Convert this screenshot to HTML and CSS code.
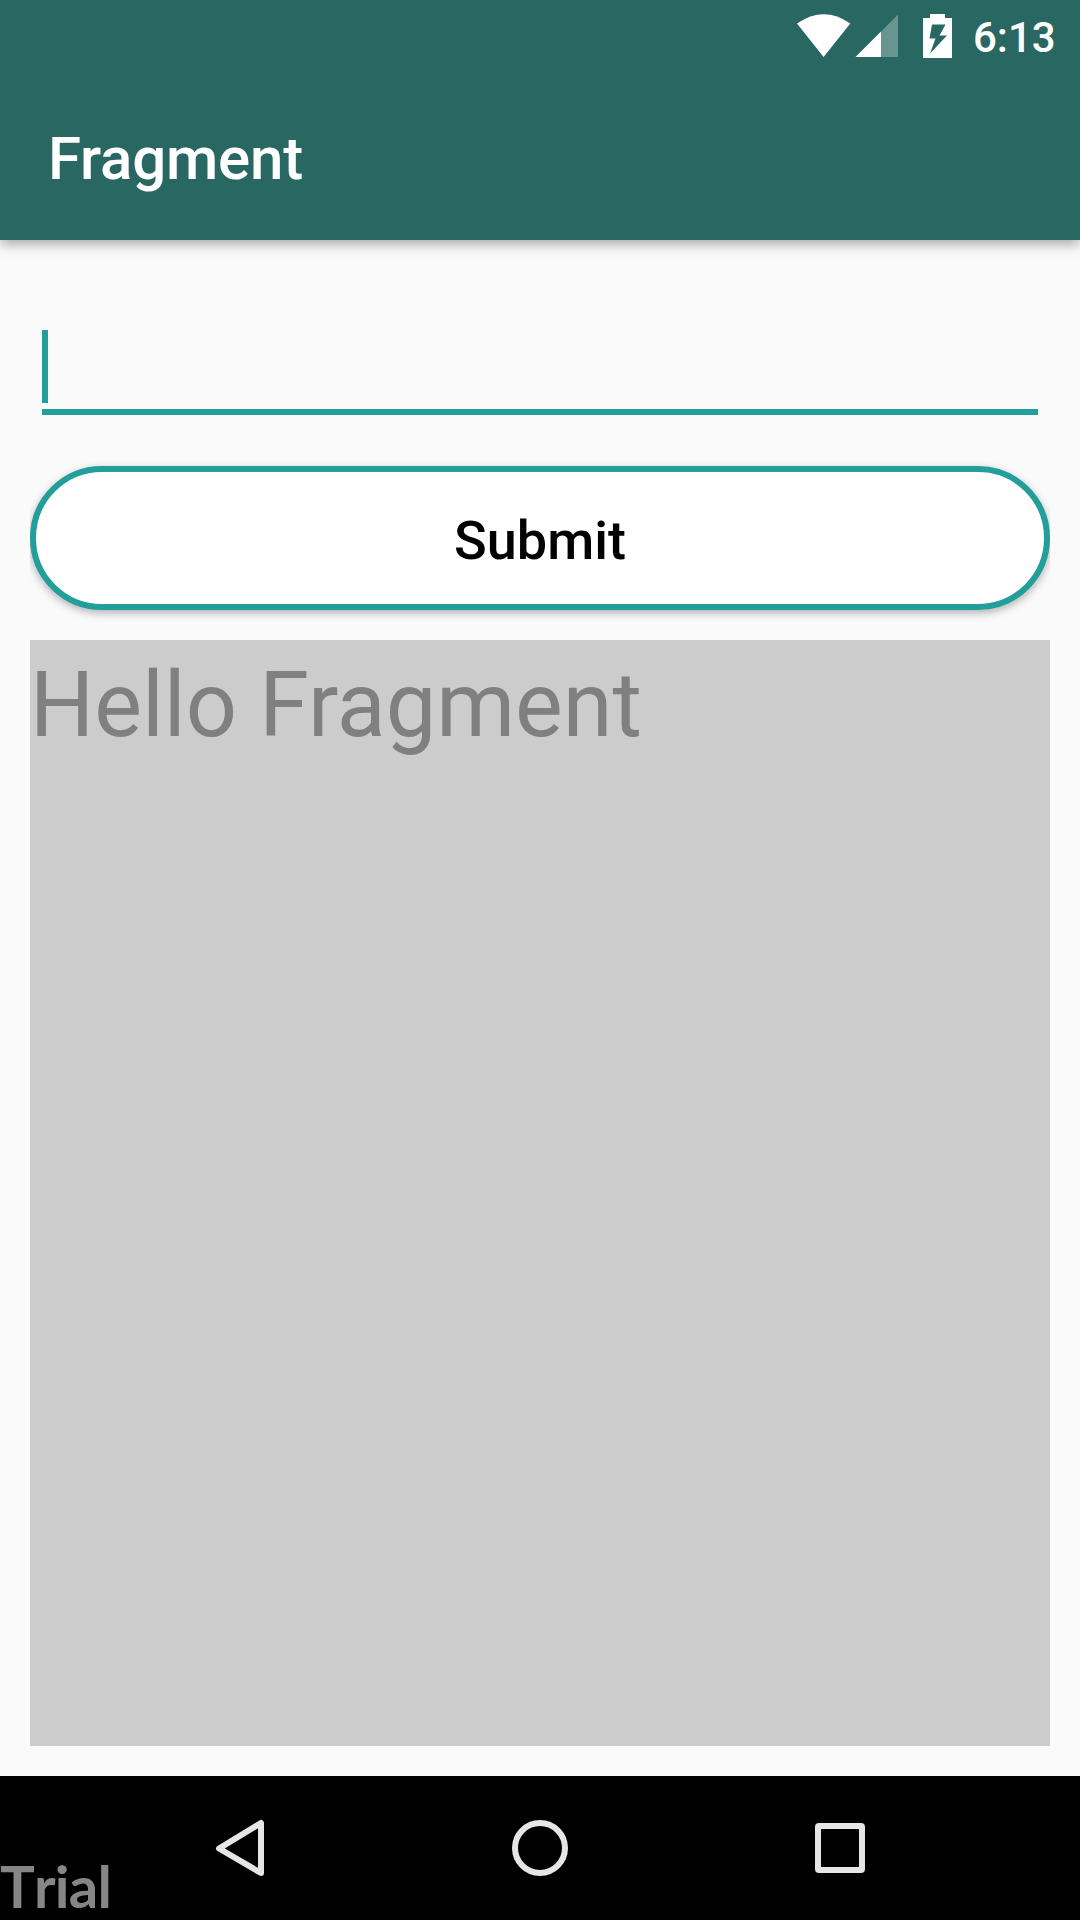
FILE: index.html
```html
<!DOCTYPE html>
<html lang="en">
<head>
<meta charset="utf-8">
<title>Fragment</title>
<link rel="stylesheet" href="styles.css">
</head>
<body>
<div class="screen">
  <header class="header">
    <div class="status-bar">
      <svg class="status-icons" width="164" height="72" viewBox="796 0 164 72" aria-hidden="true">
        <path fill="#fff" d="M797 23.5Q824 5 850.3 23.5L823.6 57Z"/>
        <path fill="#fff" fill-opacity=".3" d="M881 31.5L898 14.500V57H881Z"/>
        <path fill="#fff" d="M855.500 57L881 31.500V57Z"/>
        <path fill="#fff" fill-rule="evenodd" d="M930 14H945V18H952V58H923V18H930ZM932 24.500L929.500 38.500H935.500L930 53.500L947 35.500H939.500L945.500 24.500Z"/>
      </svg>
      <span class="clock">6:13</span>
    </div>
    <h1 class="title">Fragment</h1>
  </header>
  <main class="content">
    <div class="field"><span class="cursor"></span></div>
    <div class="button-row"><button class="submit" type="button">Submit</button></div>
    <section class="fragment">Hello Fragment</section>
  </main>
  <nav class="nav-bar">
    <svg width="60" height="60" viewBox="0 0 60 60"><path d="M9 30.500L51 5V55Z" class="nav-line"/></svg>
    <svg width="60" height="60" viewBox="0 0 60 60"><circle cx="30" cy="30" r="25" class="nav-line"/></svg>
    <svg width="60" height="60" viewBox="0 0 60 60"><rect x="8" y="8" width="44" height="44" rx="1" class="nav-line"/></svg>
    <span class="trial">Trial</span>
  </nav>
</div>
</body>
</html>
```
FILE: styles.css
```css
* { box-sizing: border-box; }
body { margin: 0; font-family: Roboto, sans-serif; }
.screen {
  display: flex;
  flex-direction: column;
  width: 1080px;
  height: 1920px;
  background: #fafafa;
  overflow: hidden;
}
.header {
  height: 240px;
  background: #296762;
  color: #fff;
  box-shadow: 0 4px 12px rgba(0, 0, 0, .34);
}
.status-bar {
  display: flex;
  justify-content: flex-end;
  height: 72px;
  padding-right: 24px;
}
.status-icons { margin-right: 13px; }
.clock {
  width: 83px;
  font-size: 42px;
  font-weight: 500;
  line-height: 76px;
  white-space: nowrap;
}
.title {
  margin: 0;
  padding-left: 48px;
  font-size: 60px;
  font-weight: 500;
  line-height: 174px;
  letter-spacing: -.2px;
}
.content {
  flex: 1;
  display: flex;
  flex-direction: column;
  padding: 30px;
}
.field {
  height: 145px;
  margin: 0 12px;
  padding-top: 60px;
  border-bottom: 6px solid #229e9b;
}
.cursor {
  display: block;
  width: 6px;
  height: 73px;
  background: #229e9b;
}
.button-row {
  height: 225px;
  padding: 51px 0 30px;
  overflow: hidden;
}
.submit {
  display: block;
  width: 100%;
  height: 144px;
  padding: 6px 0 0;
  border: 6px solid #229e9b;
  border-radius: 72px;
  background: #fff;
  color: #000;
  font: 500 54px/1 Roboto, sans-serif;
  box-shadow: 0 3px 8px rgba(0, 0, 0, .3);
}
.fragment {
  flex: 1;
  background: #ccc;
  color: #808080;
  font-size: 90px;
  line-height: 132px;
}
.nav-bar {
  position: relative;
  display: grid;
  grid-template-columns: repeat(3, 300px);
  place-content: center;
  place-items: center;
  height: 144px;
  background: #000;
}
.nav-line {
  fill: none;
  stroke: #e6e6e6;
  stroke-width: 6;
  stroke-linejoin: round;
}
.trial {
  position: absolute;
  left: 0;
  bottom: 0;
  color: #868686;
  font: 700 58px/68px Lato, sans-serif;
  font-kerning: none;
  letter-spacing: -.8px;
}
```
